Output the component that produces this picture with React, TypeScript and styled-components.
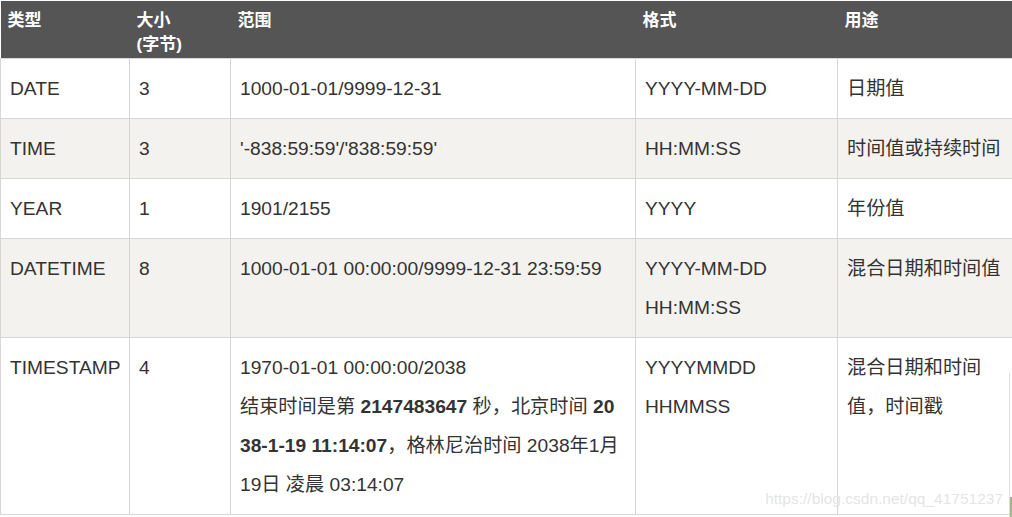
import styled, { createGlobalStyle } from "styled-components";

const GlobalStyle = createGlobalStyle`
  html, body {
    margin: 0;
    padding: 0;
    overflow: hidden;
    background: #fff;
  }
`;

const Page = styled.div`
  position: relative;
  width: 1012px;
  height: 517px;
  overflow: hidden;
  padding-top: 1px;
  box-sizing: border-box;
  font-family: "Liberation Sans", Arial, "Noto Sans CJK SC", sans-serif;
`;

const Table = styled.table`
  border-collapse: collapse;
  table-layout: fixed;
  width: 1022px;
  color: #333;
`;

const HeadCell = styled.th`
  background: #555;
  color: #fff;
  font-size: 17px;
  font-weight: bold;
  line-height: 24px;
  text-align: left;
  vertical-align: top;
  padding: 8px 7px 1px;
  height: 48px;
`;

const Row = styled.tr<{ $alt?: boolean }>`
  background: ${({ $alt }) => ($alt ? "#f3f2ee" : "#fff")};
`;

const Cell = styled.td<{ $wide?: boolean }>`
  border: 1px solid #d6d6d6;
  font-size: 19.2px;
  line-height: 39px;
  vertical-align: top;
  padding: ${({ $wide }) => ($wide ? "10px 13px 10px 9px" : "10px 9px")};
  word-break: ${({ $wide }) => ($wide ? "break-all" : "normal")};
`;

const Watermark = styled.div`
  position: absolute;
  right: 9px;
  bottom: 9px;
  font-family: "Liberation Sans", Arial, sans-serif;
  font-size: 15.5px;
  color: rgba(225, 225, 225, 0.9);
  text-shadow: 0 0 1px rgba(255, 255, 255, 0.8);
  pointer-events: none;
`;

const SideEdge = styled.div`
  position: absolute;
  left: 1009px;
  top: 373px;
  width: 3px;
  height: 144px;
  border-left: 1px solid #dcdcdc;
  box-sizing: border-box;
  &::after {
    content: "";
    position: absolute;
    left: 0;
    bottom: 0;
    width: 2px;
    height: 20px;
    background: #9bbb7b;
  }
`;

type Item = {
  type: string;
  size: string;
  range: React.ReactNode;
  format: React.ReactNode;
  use: string;
};

const rows: Item[] = [
  { type: "DATE", size: "3", range: "1000-01-01/9999-12-31", format: "YYYY-MM-DD", use: "日期值" },
  { type: "TIME", size: "3", range: "'-838:59:59'/'838:59:59'", format: "HH:MM:SS", use: "时间值或持续时间" },
  { type: "YEAR", size: "1", range: "1901/2155", format: "YYYY", use: "年份值" },
  {
    type: "DATETIME",
    size: "8",
    range: "1000-01-01 00:00:00/9999-12-31 23:59:59",
    format: (
      <>
        YYYY-MM-DD
        <br />
        HH:MM:SS
      </>
    ),
    use: "混合日期和时间值",
  },
  {
    type: "TIMESTAMP",
    size: "4",
    range: (
      <>
        1970-01-01 00:00:00/2038
        <br />
        结束时间是第 <strong>2147483647</strong> 秒，北京时间{" "}
        <strong>2038-1-19 11:14:07</strong>，格林尼治时间 2038年1月19日 凌晨 03:14:07
      </>
    ),
    format: (
      <>
        YYYYMMDD
        <br />
        HHMMSS
      </>
    ),
    use: "混合日期和时间值，时间戳",
  },
];

export default function App() {
  return (
    <Page>
      <GlobalStyle />
      <Table>
        <colgroup>
          <col style={{ width: 129 }} />
          <col style={{ width: 101 }} />
          <col style={{ width: 405 }} />
          <col style={{ width: 202 }} />
          <col style={{ width: 185 }} />
        </colgroup>
        <thead>
          <tr>
            <HeadCell>类型</HeadCell>
            <HeadCell>
              大小
              <br />
              (字节)
            </HeadCell>
            <HeadCell>范围</HeadCell>
            <HeadCell>格式</HeadCell>
            <HeadCell>用途</HeadCell>
          </tr>
        </thead>
        <tbody>
          {rows.map((r, i) => (
            <Row key={r.type} $alt={i % 2 === 1}>
              <Cell>{r.type}</Cell>
              <Cell>{r.size}</Cell>
              <Cell $wide>{r.range}</Cell>
              <Cell>{r.format}</Cell>
              <Cell>{r.use}</Cell>
            </Row>
          ))}
        </tbody>
      </Table>
      <SideEdge />
      <Watermark>https://blog.csdn.net/qq_41751237</Watermark>
    </Page>
  );
}
